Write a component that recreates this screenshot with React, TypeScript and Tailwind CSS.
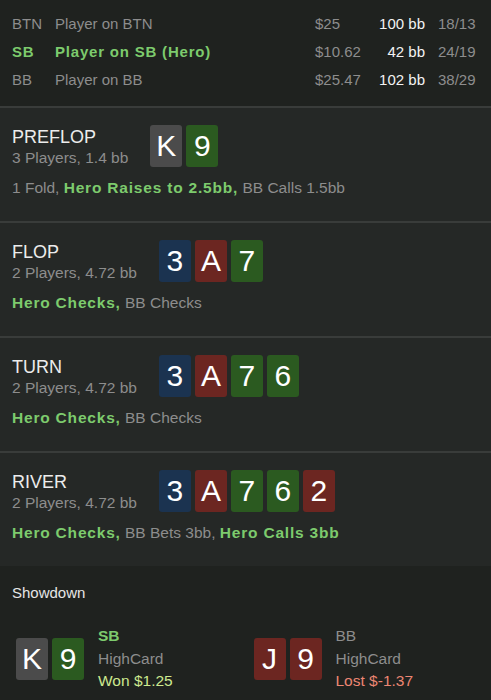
import React from "react";

type CardColor = "gray" | "green" | "blue" | "red";

const cardBg: Record<CardColor, string> = {
  gray: "bg-[#4b4b4b]",
  green: "bg-[#2b5a20]",
  blue: "bg-[#1b3350]",
  red: "bg-[#6c2621]",
};

function Card({ v, c }: { v: string; c: CardColor }) {
  return (
    <div
      className={`${cardBg[c]} w-[32px] h-[42px] rounded-[3px] flex items-center justify-center text-white text-[30px] leading-none`}
    >
      {v}
    </div>
  );
}

type Seg = { t: string; hero?: boolean };

function Street({
  title,
  sub,
  cards,
  actions,
}: {
  title: string;
  sub: string;
  cards: { v: string; c: CardColor }[];
  actions: Seg[];
}) {
  return (
    <div className="border-t-2 border-[#393c3a] bg-[#252826] pl-3 pt-[17px] pb-[23px]">
      <div className="flex items-start gap-[22px] h-[42px]">
        <div className="flex flex-col">
          <div className="text-[18px] leading-[24px] text-[#ececec]">{title}</div>
          <div className="text-[15.5px] leading-[18px] text-[#8d8d8d]">{sub}</div>
        </div>
        <div className="flex gap-[4px]">
          {cards.map((k, i) => (
            <Card key={i} v={k.v} c={k.c} />
          ))}
        </div>
      </div>
      <div className="mt-[11px] h-[20px] text-[15.5px] leading-[20px] text-[#8d8d8d] whitespace-nowrap">
        {actions.map((s, i) =>
          s.hero ? (
            <span key={i} className="font-bold text-[#7dcb6d] tracking-[0.8px]">
              {s.t}
            </span>
          ) : (
            <span key={i}>{s.t}</span>
          )
        )}
      </div>
    </div>
  );
}

function PlayerRow({
  pos,
  name,
  money,
  bb,
  ratio,
  hero,
}: {
  pos: string;
  name: string;
  money: string;
  bb: string;
  ratio: string;
  hero?: boolean;
}) {
  const c = hero ? "text-[#7dcb6d] font-bold tracking-[0.8px]" : "text-[#8d8d8d]";
  return (
    <div className="flex items-center h-[28px] text-[15px]">
      <div className={`w-[43px] ${c}`}>{pos}</div>
      <div className={`flex-1 ${c}`}>{name}</div>
      <div className="w-[60px] text-[#8d8d8d]">{money}</div>
      <div className="w-[50px] text-right text-[#f2f2f2]">{bb}</div>
      <div className="w-[13px]" />
      <div className="w-[53px] text-[#8d8d8d]">{ratio}</div>
    </div>
  );
}

export default function App() {
  return (
    <div
      className="w-[491px] h-[700px] overflow-hidden bg-[#1f221f]"
      style={{ fontFamily: '"Liberation Sans", Arial, sans-serif' }}
    >
      <div className="pl-3 pt-[10px] pb-[12px]">
        <PlayerRow pos="BTN" name="Player on BTN" money="$25" bb="100 bb" ratio="18/13" />
        <PlayerRow pos="SB" name="Player on SB (Hero)" money="$10.62" bb="42 bb" ratio="24/19" hero />
        <PlayerRow pos="BB" name="Player on BB" money="$25.47" bb="102 bb" ratio="38/29" />
      </div>

      <Street
        title="PREFLOP"
        sub="3 Players, 1.4 bb"
        cards={[
          { v: "K", c: "gray" },
          { v: "9", c: "green" },
        ]}
        actions={[
          { t: "1 Fold, " },
          { t: "Hero Raises to 2.5bb,", hero: true },
          { t: " BB Calls 1.5bb" },
        ]}
      />
      <Street
        title="FLOP"
        sub="2 Players, 4.72 bb"
        cards={[
          { v: "3", c: "blue" },
          { v: "A", c: "red" },
          { v: "7", c: "green" },
        ]}
        actions={[{ t: "Hero Checks,", hero: true }, { t: " BB Checks" }]}
      />
      <Street
        title="TURN"
        sub="2 Players, 4.72 bb"
        cards={[
          { v: "3", c: "blue" },
          { v: "A", c: "red" },
          { v: "7", c: "green" },
          { v: "6", c: "green" },
        ]}
        actions={[{ t: "Hero Checks,", hero: true }, { t: " BB Checks" }]}
      />
      <Street
        title="RIVER"
        sub="2 Players, 4.72 bb"
        cards={[
          { v: "3", c: "blue" },
          { v: "A", c: "red" },
          { v: "7", c: "green" },
          { v: "6", c: "green" },
          { v: "2", c: "red" },
        ]}
        actions={[
          { t: "Hero Checks,", hero: true },
          { t: " BB Bets 3bb, " },
          { t: "Hero Calls 3bb", hero: true },
        ]}
      />

      <div className="bg-[#1f221f] pl-3 pt-[17px]">
        <div className="text-[15px] leading-[20px] text-[#e6e6e6]">Showdown</div>
      </div>
      <div className="grid grid-cols-2 pl-4 mt-[22px]">
        <div className="flex items-center gap-[14px]">
          <div className="flex gap-[4px]">
            <Card v="K" c="gray" />
            <Card v="9" c="green" />
          </div>
          <div className="flex flex-col text-[15.5px] leading-[22.5px]">
            <div className="font-bold text-[#7dcb6d]">SB</div>
            <div className="text-[#8d8d8d]">HighCard</div>
            <div className="text-[#cde98f]">Won $1.25</div>
          </div>
        </div>
        <div className="flex items-center gap-[14px]">
          <div className="flex gap-[4px]">
            <Card v="J" c="red" />
            <Card v="9" c="red" />
          </div>
          <div className="flex flex-col text-[15.5px] leading-[22.5px]">
            <div className="text-[#8d8d8d]">BB</div>
            <div className="text-[#8d8d8d]">HighCard</div>
            <div className="text-[#ec8673]">Lost $-1.37</div>
          </div>
        </div>
      </div>
    </div>
  );
}
